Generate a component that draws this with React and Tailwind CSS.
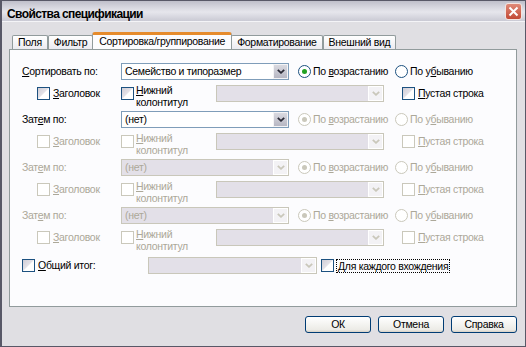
import React from "react";

const Chevron = ({ disabled }) => (
  <svg width="8" height="5" viewBox="0 0 8 5">
    <polyline
      points="0.8,0.8 4,3.8 7.2,0.8"
      fill="none"
      stroke={disabled ? "#c9c7ba" : "#2a2a36"}
      strokeWidth="1.8"
    />
  </svg>
);

const Check = ({ disabled }) => (
  <span
    className={`block w-[13px] h-[13px] shrink-0 border ${
      disabled
        ? "border-[#cac8bb] bg-white"
        : "border-[#1c5180] bg-[linear-gradient(135deg,#cfcdd6_0%,#e4e2e8_48%,#ffffff_52%,#ffffff_100%)]"
    }`}
  />
);

const Radio = ({ checked, disabled }) => (
  <span
    className={`flex items-center justify-center w-[13px] h-[13px] shrink-0 rounded-full border bg-white ${
      disabled ? "border-[#cac8bb]" : "border-[#1c5180]"
    }`}
  >
    {checked && (
      <span
        className={`block w-[5px] h-[5px] rounded-full ${
          disabled ? "bg-[#cac8bb]" : "bg-[#21a121]"
        }`}
      />
    )}
  </span>
);

const Combo = ({ value, disabled, w }) => (
  <div
    className={`flex h-[17px] shrink-0 border ${w} ${
      disabled ? "border-[#c9c7ba] bg-[#e3e0e8]" : "border-[#7f9db9] bg-white"
    }`}
  >
    <div
      className={`flex-1 flex items-center px-[3px] leading-none whitespace-nowrap ${
        disabled ? "text-[#aca899]" : "text-black"
      }`}
    >
      {value}
    </div>
    <div
      className={`w-[15px] flex items-center justify-center border ${
        disabled
          ? "border-white bg-[#f3f2f5]"
          : "border-[#f4f4f6] bg-[linear-gradient(180deg,#d9d9e0,#b7b7c3)]"
      }`}
    >
      <Chevron disabled={disabled} />
    </div>
  </div>
);

// level 0: first sort row, 1: second (combo active), 2: fully disabled
const Group = ({ level }) => {
  const head = level <= 1 ? "text-black" : "text-[#aca899]";
  const radio = level === 0 ? "text-black" : "text-[#aca899]";
  const sub = level === 0 ? "text-black" : "text-[#aca899]";
  return (
    <div className="flex flex-col gap-[5px]">
      <div className="flex items-center h-[17px]">
        <span className={`w-[99px] shrink-0 whitespace-nowrap ${head}`}>
          {level === 0 ? (
            <>
              <u>С</u>ортировать по:
            </>
          ) : (
            <>
              Зат<u>е</u>м по:
            </>
          )}
        </span>
        <Combo
          w="w-[168px]"
          value={level === 0 ? "Семейство и типоразмер" : "(нет)"}
          disabled={level === 2}
        />
        <div className="flex items-center w-[97px] ml-[9px] gap-[2px] whitespace-nowrap">
          <Radio checked disabled={level !== 0} />
          <span className={radio}>
            По <u>в</u>озрастанию
          </span>
        </div>
        <div className="flex items-center gap-[2px] whitespace-nowrap">
          <Radio disabled={level !== 0} />
          <span className={radio}>
            По у<u>б</u>ыванию
          </span>
        </div>
      </div>
      <div className="flex items-center h-[17px]">
        <div className="flex items-center gap-[3px] w-[84px] ml-[15px] shrink-0">
          <Check disabled={level !== 0} />
          <span className={sub}>
            <u>З</u>аголовок
          </span>
        </div>
        <div className="flex items-center gap-[2px] w-[95px] shrink-0">
          <Check disabled={level !== 0} />
          <span className={`leading-[12px] mt-[5px] ${sub}`}>
            <u>Н</u>ижний
            <br />
            колонтитул
          </span>
        </div>
        <Combo w="w-[168px]" value="" disabled />
        <div className="flex items-center gap-[3px] ml-[18px] whitespace-nowrap">
          <Check disabled={level !== 0} />
          <span className={sub}>
            <u>П</u>устая строка
          </span>
        </div>
      </div>
    </div>
  );
};

const Tab = ({ children, active }) =>
  active ? (
    <div className="h-[17px] px-[6px] flex items-center bg-[#fcfcfe] border border-b-0 border-[#919b9c] border-t-[3px] border-t-[#e68b2c] rounded-t-[3px] -mx-[1px] z-10 relative mb-[-1px] whitespace-nowrap">
      {children}
    </div>
  ) : (
    <div className="h-[14px] mt-[3px] px-[5px] flex items-center bg-[linear-gradient(180deg,#ffffff,#ecebf0)] border border-b-0 border-[#919b9c] rounded-t-[2px] whitespace-nowrap">
      {children}
    </div>
  );

const Button = ({ children }) => (
  <button className="w-[66px] h-[17px] rounded-[3px] border border-[#003c74] bg-[linear-gradient(180deg,#ffffff,#ecebe6_85%,#d6d0c5)] flex items-center justify-center leading-none text-black">
    {children}
  </button>
);

export default function App() {
  return (
    <div className="w-[526px] h-[347px] flex flex-col bg-[#e0dfe3] border border-[#585867] border-l-[2px] overflow-hidden text-[10.5px] tracking-[-0.3px] font-['Liberation_Sans',Arial,sans-serif] text-black select-none">
      {/* Title bar */}
      <div className="h-[21px] shrink-0 flex items-center justify-between pl-[5px] pr-[3px] bg-[linear-gradient(180deg,#bfbfca_0%,#d9d9e1_35%,#e6e6ec_55%,#cacad4_100%)] border-b border-[#f4f4f7]">
        <span className="font-bold text-[12px] tracking-[-0.6px] mt-[6px]">
          Свойства спецификации
        </span>
        <div className="w-[17px] h-[17px] rounded-[3px] border border-[#f4e4e0] bg-[linear-gradient(180deg,#e08a78,#c24a36)] flex items-center justify-center">
          <svg width="11" height="11" viewBox="0 0 11 11">
            <path d="M1.5 1.5 L9.5 9.5 M9.5 1.5 L1.5 9.5" stroke="#fff" strokeWidth="2" />
          </svg>
        </div>
      </div>

      <div className="flex-1 flex flex-col pl-[7px] pr-[8px]">
        {/* Tabs */}
        <div className="flex items-start mt-[10px] pl-[3px] h-[17px]">
          <Tab>Поля</Tab>
          <Tab>Фильтр</Tab>
          <Tab active>Сортировка/группирование</Tab>
          <Tab>Форматирование</Tab>
          <Tab>Внешний вид</Tab>
        </div>

        {/* Panel */}
        <div className="h-[258px] shrink-0 border border-[#919b9c] bg-[#fcfcfe] pt-[13px] pl-[12px] flex flex-col">
          <div className="flex flex-col gap-[9px]">
            <Group level={0} />
            <Group level={1} />
            <Group level={2} />
            <Group level={2} />
          </div>
          <div className="flex items-center h-[17px] mt-[11px]">
            <div className="flex items-center gap-[3px] w-[126px] shrink-0">
              <Check />
              <span>
                <u>О</u>бщий итог:
              </span>
            </div>
            <Combo w="w-[169px]" value="" disabled />
            <div className="flex items-center gap-[2px] ml-[4px] whitespace-nowrap">
              <Check />
              <span className="border border-dotted border-black px-[1px] leading-[12px]">
                <u>Д</u>ля каждого вхождения
              </span>
            </div>
          </div>
        </div>

        {/* Buttons */}
        <div className="flex justify-end gap-[7px] mt-[9px]">
          <Button>ОК</Button>
          <Button>Отмена</Button>
          <Button>Справка</Button>
        </div>
      </div>
    </div>
  );
}
